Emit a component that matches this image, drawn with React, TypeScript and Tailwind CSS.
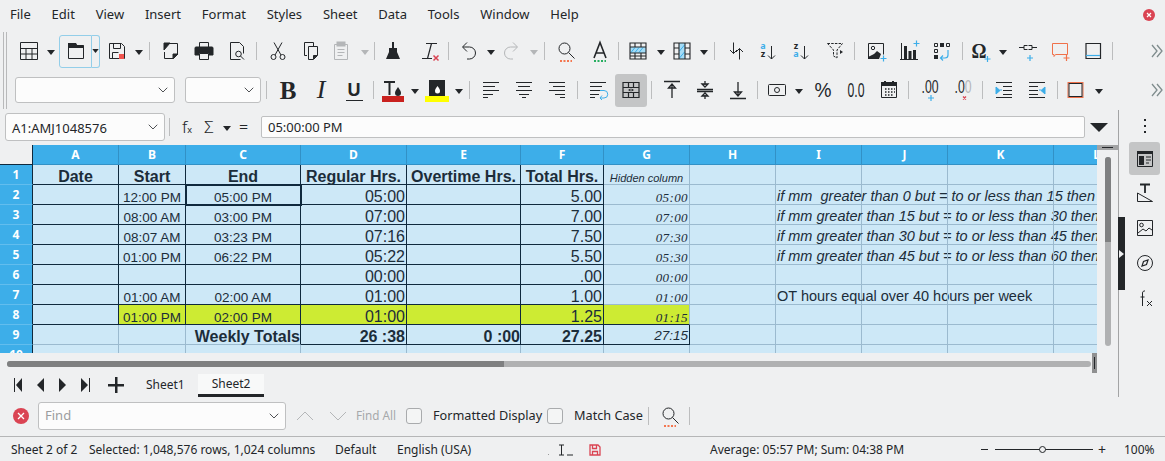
import React from "react";
import { ChevronDown } from "lucide-react";

const INK = "#232629";
const BLUE = "#3daee9";
const RED = "#da4453";
const ORANGE = "#f4764f";
const GREY = "#b4b6b8";

// --- small svg helpers ---
const Ico = ({ children, size = "w-6 h-6" }: { children: React.ReactNode; size?: string }) => (
  <svg viewBox="0 0 24 24" className={size} fill="none" stroke={INK} strokeWidth={1}>
    {children}
  </svg>
);
const Plus = ({ x = 19, y = 20, c = BLUE }: { x?: number; y?: number; c?: string }) => (
  <path d={`M${x - 3} ${y}h6M${x} ${y - 3}v6`} stroke={c} strokeWidth={1.2} />
);
const Dots = ({ c }: { c: string }) => (
  <path d="M6 22h12" stroke={c} strokeWidth={2} strokeDasharray="2 1.5" />
);
const Txt = ({ x, y, s, w = 400, f = "Noto Sans", c = INK, len, children }: {
  x: number; y: number; s: number; w?: number; f?: string; c?: string; len?: number; children: React.ReactNode;
}) => (
  <text
    x={x}
    y={y}
    fontSize={s}
    fontWeight={w}
    fontFamily={f}
    fill={c}
    stroke="none"
    textAnchor="middle"
    textLength={len}
    lengthAdjust={len ? "spacingAndGlyphs" : undefined}
  >
    {children}
  </text>
);

const Slot = ({ ml, w = "w-6", children }: { ml: string; w?: string; children: React.ReactNode }) => (
  <div className={`${ml} ${w} h-6 shrink-0 flex items-center justify-center`}>{children}</div>
);
const Arrow = ({ ml, c = INK }: { ml: string; c?: string }) => (
  <div className={`${ml} w-2 h-6 shrink-0 flex items-center justify-center`}>
    <svg viewBox="0 0 8 5" className="w-2 h-[5px] mt-[2px]"><path d="M0 0h8L4 5z" fill={c} /></svg>
  </div>
);
const Sep = ({ ml }: { ml: string }) => <div className={`${ml} w-px h-[18px] shrink-0 bg-[#bcbdbe]`} />;
const More = () => (
  <div className="ml-auto w-4 h-6 flex items-center justify-center">
    <svg viewBox="0 0 12 14" className="w-3 h-[14px]" fill="none" stroke="#7f8c8d" strokeWidth={1.3}>
      <path d="M1 1l5 6-5 6M6 1l5 6-5 6" />
    </svg>
  </div>
);

// --- toolbar icons ---
const TableIcon = () => (
  <Ico><path d="M3.5 3.5h17v17h-17zM3.5 9.5h17M3.5 15h17M9 9.5v11M15 9.5v11" /></Ico>
);
const OpenIcon = () => (
  <Ico><path d="M4.5 6.5h15v13h-15z" /><path d="M4 4h8l1.5 2.5H20V9H4z" fill={INK} stroke="none" /></Ico>
);
const SaveIcon = () => (
  <Ico>
    <path d="M4.5 4.5h12l3 3v12h-15zM8.5 4.5v5h7v-5M7.5 19.5v-6h6" />
    <rect x="14" y="15" width="5" height="5" fill="#f0544f" stroke="none" />
  </Ico>
);
const PdfIcon = () => (
  <Ico>
    <path d="M5.5 8V4.5h13v11l-4 4h-9V13" />
    <path d="M5 4h6L5 11zM14 19.5v-4.5h5z" fill={INK} />
  </Ico>
);
const PrintIcon = () => (
  <Ico>
    <path d="M7.5 8V3.5h9V8M7.5 14.5h9v6h-9z" />
    <path d="M4 8h16a1 1 0 0 1 1 1v7h-4v-2.5H7V16H3V9a1 1 0 0 1 1-1z" fill={INK} />
  </Ico>
);
const PreviewIcon = () => (
  <Ico>
    <path d="M15.5 20.5h-10v-17h9l4 4v7" />
    <circle cx="13.5" cy="15" r="2.8" />
    <path d="M15.5 17l3.5 3.5" />
  </Ico>
);
const CutIcon = () => (
  <Ico>
    <circle cx="7.5" cy="18" r="2.5" /><circle cx="16.5" cy="18" r="2.5" />
    <path d="M9 16L16 3.5M15 16L8 3.5" />
  </Ico>
);
const CopyIcon = () => (
  <Ico>
    <path d="M8 16.5H5.5v-13h9V7" />
    <path d="M9.5 7.5h9v9l-4 4h-5z" />
    <path d="M14.5 20v-3.5H18z" fill={INK} />
  </Ico>
);
const PasteIcon = () => (
  <svg viewBox="0 0 24 24" className="w-6 h-6" fill="none" stroke={GREY}>
    <path d="M5.5 5.5h13v15h-13zM8.5 10.5h7M8.5 13.5h7M8.5 16.5h5" />
    <rect x="8" y="3" width="8" height="4" fill={GREY} />
  </svg>
);
const BrushIcon = () => (
  <Ico>
    <path d="M11 3h2v6h-2z" fill={INK} stroke="none" />
    <path d="M8 9h8v4l3 7H5l3-7z" fill={INK} stroke="none" />
  </Ico>
);
const ClearIcon = () => (
  <Ico>
    <path d="M8 4.5h11M13.5 4.5L9.5 19.5M4 19.5h10" strokeWidth={1.2} />
    <path d="M15.5 16.5l5 5M20.5 16.5l-5 5" stroke={RED} strokeWidth={1.5} />
  </Ico>
);
const UndoIcon = ({ c = INK, flip = false }: { c?: string; flip?: boolean }) => (
  <svg viewBox="0 0 24 24" className={`w-6 h-6 ${flip ? "-scale-x-100" : ""}`} fill="none" stroke={c}>
    <path d="M11 3.5L6.5 8l4.5 4.5M7 8h6.5a6 6 0 0 1 0 12H11" />
  </svg>
);
const FindIcon = () => (
  <Ico>
    <circle cx="10.5" cy="9.5" r="5.5" /><path d="M14.5 13.5L20.5 19.5" />
    <Dots c={ORANGE} />
  </Ico>
);
const SpellIcon = () => (
  <Ico>
    <path d="M6 19L12 3.5L18 19M8 14h8" strokeWidth={1.6} />
    <Dots c="#27ae60" />
  </Ico>
);
const RowIcon = () => (
  <Ico>
    <rect x="4" y="8" width="16" height="6" fill="#a5dcf6" stroke="none" />
    <path d="M5 13.5l4-5M9 13.5l4-5M13 13.5l4-5" stroke={BLUE} />
    <path d="M4 4h16v16H4zM4 8h16M4 14h16M4 17h16M9 4v4M15 4v4M9 14v6M15 14v6" strokeWidth={1.1} />
  </Ico>
);
const ColIcon = () => (
  <Ico>
    <rect x="9" y="4" width="6" height="16" fill="#a5dcf6" stroke="none" />
    <path d="M9.5 12l5-6M9.5 19l5-6" stroke={BLUE} />
    <path d="M4 4h16v16H4zM9 4v16M15 4v16M4 9h5M4 15h5M15 9h5M15 15h5" strokeWidth={1.1} />
  </Ico>
);
const SortIcon = () => (
  <Ico>
    <path d="M9.5 3.5v11M6 11l3.5 3.5L13 11M15.5 9.5v11M12 13l3.5-3.5L19 13" />
  </Ico>
);
const AzIcon = ({ flip = false }: { flip?: boolean }) => (
  <Ico>
    <text fontSize={9} fontWeight={700} fontFamily="Noto Sans" stroke="none" textAnchor="middle">
      <tspan x={7} y={10} fill={flip ? INK : BLUE}>{flip ? "z" : "a"}</tspan>
      <tspan x={7} y={18} fill={flip ? BLUE : INK}>{flip ? "a" : "z"}</tspan>
    </text>
    <path d="M15.5 7v13M12 16.5l3.5 3.5 3.5-3.5" />
  </Ico>
);
const FilterIcon = () => (
  <Ico>
    <path d="M4.5 4.5h15L14 11v8l-3.5-2v-6z" strokeDasharray="2.5 1.2" />
    <path d="M17 11l3 2-3 2z" fill={INK} stroke="none" />
  </Ico>
);
const ImageIcon = () => (
  <Ico>
    <path d="M4.5 4.5h15v11M14 19.5H4.5v-15" />
    <circle cx="9" cy="9" r="1.7" />
    <path d="M4 20v-2l6-3 3-3 4 3-2 5z" fill={INK} stroke="none" />
    <Plus x={19.5} y={19.5} />
  </Ico>
);
const ChartIcon = () => (
  <Ico>
    <path d="M3 20.5h18M4.5 4v16" />
    <path d="M7 7h3v13H7zM11.5 12h3v8h-3zM16 11h3v9h-3z" fill={INK} stroke="none" />
    <Plus x={19.5} y={4.5} />
  </Ico>
);
const PivotIcon = () => (
  <Ico>
    <path d="M4.5 4.5h3v3h-3zM16.5 4.5h3v3h-3zM4.5 10.5h3v3h-3z" />
    <path d="M10 4h4v4h-4zM4 16h4v4H4z" fill={INK} stroke="none" />
    <path d="M18 11v5a3 3 0 0 1-3 3h-4M13 16.5L10.5 19l2.5 2.5" stroke={BLUE} strokeWidth={1.2} />
  </Ico>
);
const OmegaIcon = () => (
  <Ico>
    <Txt x={11} y={19} s={22} w={700} f="Liberation Serif" len={15}>Ω</Txt>
    <Plus x={19.5} y={20} />
  </Ico>
);
const LinkIcon = () => (
  <Ico>
    <path d="M3 8.5h5M16 8.5h5M11.5 6.5H8v4h3.5M12.5 6.5H16v4h-3.5" />
    <Plus x={14} y={19} />
  </Ico>
);
const CommentIcon = () => (
  <Ico>
    <path d="M4.5 4.5h15v11h-12l-1.5 2v-2H4.5z" stroke="#f0714a" />
    <Plus x={18.5} y={19} c="#f0714a" />
  </Ico>
);
const HeaderIcon = () => (
  <Ico>
    <path d="M5 4.5h14.5v15H5z" strokeWidth={1.2} />
    <path d="M5 16.5h14" stroke={BLUE} strokeWidth={1.2} />
  </Ico>
);
const FontColor = () => (
  <svg viewBox="0 0 24 24" className="w-6 h-6">
    <path d="M3 3h11v2H9.5v12h-2V5H3z" fill={INK} />
    <path d="M17 9c2 3 3 4 3 6a3 3 0 0 1-6 0c0-2 1-3 3-6z" fill={INK} />
    <rect x="1" y="18" width="22" height="6" fill="#c9211e" />
  </svg>
);
const BgColor = () => (
  <svg viewBox="0 0 24 24" className="w-6 h-6">
    <rect x="4" y="2" width="16" height="16" fill={INK} />
    <path d="M12.5 8c2 2.5 2.5 3.5 2.5 5a2.5 2.5 0 0 1-5 0c0-1.5.5-2.5 2.500-5z" fill="#fff" />
    <rect x="0" y="18" width="24" height="6" fill="#ffff00" />
  </svg>
);
const Lines = ({ d, extra }: { d: string; extra?: React.ReactNode }) => (
  <Ico><path d={d} />{extra}</Ico>
);
// merge & center: three-row grid with the middle row open and two small arrows
const MergeIcon = () => (
  <Ico>
    <path d="M4 4.5h16v15H4zM4 9.500h16M4 14.500h16M9.500 4.500v5M14.500 4.500v5M9.500 14.500v5M14.500 14.500v5" strokeWidth={1.2} />
    <path d="M11.500 10.500l-2.500 1.500 2.500 1.500zM12.500 10.500l2.500 1.500-2.500 1.500z" fill={INK} stroke="none" />
  </Ico>
);
const VAlign = ({ d }: { d: string }) => <Ico><path d={d} strokeWidth={1.3} /></Ico>;
const CashIcon = () => (
  <Ico><rect x="3.5" y="6.5" width="17" height="11" rx="1" /><circle cx="12" cy="12" r="2.5" /></Ico>
);
const CalIcon = () => (
  <Ico>
    <path d="M4.5 4.5h15v15h-15z" />
    <path d="M4 4h3V3h2v1h6V3h2v1h3v4H4z" fill={INK} stroke="none" />
    <path d="M8 11h1.5M11 11h1.5M14 11h1.5M17 11h1M8 14h1.5M11 14h1.5M14 14h1.5M17 14h1M8 17h1.5M11 17h1.5M14 17h1.5" strokeWidth={1.5} />
  </Ico>
);
const BorderIcon = () => (
  <Ico>
    <rect x="4" y="4.5" width="15" height="15" stroke="#f0714a" />
    <rect x="5" y="5.5" width="13" height="13" />
  </Ico>
);

const Combo = ({ w, children, h = "h-[26px]" }: { w: string; h?: string; children?: React.ReactNode }) => (
  <div className={`${w} ${h} shrink-0 bg-[#fcfcfc] border border-[#bfc0c1] rounded-[3px] flex items-center justify-between pl-[6px] pr-[3px]`}>
    <span>{children}</span>
    <ChevronDown size={16} strokeWidth={1.2} color={INK} />
  </div>
);

// --- sheet data ---
const HEADS = ["A", "B", "C", "D", "E", "F", "G", "H", "I", "J", "K", "L"];
const RULES = [
  "if mm  greater than 0 but = to or less than 15 then",
  "if mm greater than 15 but = to or less than 30 then",
  "if mm greater than 30 but = to or less than 45 then",
  "if mm greater than 45 but = to or less than 60 then",
];
const ROWS: string[][] = [
  ["Date", "Start", "End", "Regular Hrs.", "Overtime Hrs.", "Total Hrs.", "Hidden column", "", "", "", "", ""],
  ["", "12:00 PM", "05:00 PM", "05:00", "", "5.00", "05:00", "", RULES[0], "", "", ""],
  ["", "08:00 AM", "03:00 PM", "07:00", "", "7.00", "07:00", "", RULES[1], "", "", ""],
  ["", "08:07 AM", "03:23 PM", "07:16", "", "7.50", "07:30", "", RULES[2], "", "", ""],
  ["", "01:00 PM", "06:22 PM", "05:22", "", "5.50", "05:30", "", RULES[3], "", "", ""],
  ["", "", "", "00:00", "", ".00", "00:00", "", "", "", "", ""],
  ["", "01:00 AM", "02:00 AM", "01:00", "", "1.00", "01:00", "", "OT hours equal over 40 hours per week", "", "", ""],
  ["", "01:00 PM", "02:00 PM", "01:00", "", "1.25", "01:15", "", "", "", "", ""],
  ["", "", "Weekly Totals", "26 :38", "0 :00", "27.25", "27:15", "", "", "", "", ""],
  ["", "", "", "", "", "", "", "", "", "", "", ""],
];

const textClass = (r: number, c: number) => {
  if (r === 0) {
    if (c === 6) return "justify-center items-end text-[11px] italic leading-[11px]";
    return "justify-center items-center text-[16px] font-bold pt-[4px]";
  }
  if (r === 8) {
    if (c === 6) return "justify-end items-center text-[13.5px] italic pt-[4px] pr-[1px]";
    if (c === 4 || c === 2) return "justify-end items-center text-[16px] font-bold pt-[4px]";
    return "justify-end items-center text-[16px] font-bold pt-[4px] pr-[1px]";
  }
  if (c === 1 || c === 2) return "justify-center items-end text-[13.5px] leading-[13px]";
  if (c === 3 || c === 5) return "justify-end items-center text-[16px] pr-[1px] pt-[4px]";
  if (c === 6) return "justify-end items-end text-[13px] italic font-['Liberation_Serif'] tracking-[0.4px] leading-[13px] pr-[1px]";
  if (c === 8) return `justify-start items-center text-[14.5px] whitespace-pre pl-[1px] pt-[5px] ${r === 6 ? "" : "italic"}`;
  return "";
};

const cellBorder = (r: number, c: number) => {
  const right = (r <= 7 && c <= 5) || (r === 8 && c >= 2 && c <= 6);
  const bottom = (r <= 7 && c <= 5) || (r === 7 && c === 6) || (r === 8 && c >= 3 && c <= 6);
  return `${right ? "border-r-[#10293d]" : "border-r-[#9bbacf]"} ${bottom ? "border-b-[#10293d]" : "border-b-[#9bbacf]"}`;
};

const Sheet = () => (
  <div className="w-[1097px] h-[208px] overflow-hidden bg-[#cde8f7] shrink-0 font-['Liberation_Sans'] text-[#1c2d3a]">
    <div className="grid grid-cols-[33px_86px_67px_115px_106px_114px_83px_86px_86px_86px_86px_106px_86px] auto-rows-[20px] w-[1140px]">
      <div className="bg-[#eff0f1] border-r border-b border-[#10293d]" />
      {HEADS.map((h) => (
        <div key={h} className="bg-[#3daee9] border-r border-b border-[#3291c6] flex items-center justify-center text-white text-[12px] font-bold font-['Noto_Sans']">
          {h}
        </div>
      ))}
      {ROWS.map((row, r) => (
        <React.Fragment key={r}>
          <div className="bg-[#3daee9] border-r border-b border-r-[#10293d] border-b-[#62bdee] flex items-center justify-center text-white text-[12px] font-bold font-['Noto_Sans']">
            {r + 1}
          </div>
          {row.map((t, c) => (
            <div
              key={c}
              className={`flex min-w-0 border-r border-b ${cellBorder(r, c)} ${textClass(r, c)} ${r === 7 && c >= 1 && c <= 6 ? "bg-[#cdeb33]" : ""} ${r === 1 && c === 2 ? "outline-2 -outline-offset-1 outline-[#10293d]" : ""}`}
            >
              <span className="whitespace-pre">{t}</span>
            </div>
          ))}
        </React.Fragment>
      ))}
    </div>
  </div>
);

const Check = () => <div className="w-4 h-4 rounded-[3px] border border-[#a9abad] bg-[#f4f5f5] shrink-0" />;
const Dot = ({ w }: { w: string }) => (
  <span className={`${w} flex shrink-0`}><span className="w-px h-px mt-[9px] bg-[#9a9b9c]" /></span>
);

export default function App() {
  return (
    <div className="w-[1165px] h-[461px] overflow-hidden bg-[#eff0f1] text-[#232629] font-['Noto_Sans'] flex flex-col">
      {/* menu bar */}
      <div className="h-[30px] flex items-center pl-[10px] gap-[20.8px] text-[13px] shrink-0">
        {["File", "Edit", "View", "Insert", "Format", "Styles", "Sheet", "Data", "Tools", "Window", "Help"].map((m) => (
          <span key={m}>{m}</span>
        ))}
        <div className="ml-auto mr-[10px] w-3 h-3 rounded-full bg-[#da4453] flex items-center justify-center">
          <svg viewBox="0 0 12 12" className="w-3 h-3" stroke="#fff" strokeWidth={1.2}><path d="M4 4l4 4M8 4l-4 4" /></svg>
        </div>
      </div>

      {/* toolbars */}
      <div className="flex shrink-0 h-[80px]">
        <div className="ml-[3px] w-1 mt-[2px] mb-px border-x border-[#b8b9ba] shrink-0" />
        <div className="flex-1 flex flex-col min-w-0">
          <div className="h-10 flex items-center pt-[2px]">
            <Slot ml="ml-[10px]"><TableIcon /></Slot>
            <Arrow ml="ml-[6px]" />
            <div className="ml-1 flex h-[33px] w-[41px] shrink-0">
              <div className="w-[33px] border border-[#93cee9] rounded-l-[3px] flex items-center justify-center"><OpenIcon /></div>
              <div className="w-2 border border-l-0 border-[#93cee9] rounded-r-[3px] flex items-center justify-center">
                <svg viewBox="0 0 8 5" className="w-[7px] h-1"><path d="M0 0h8L4 5z" fill={INK} /></svg>
              </div>
            </div>
            <Slot ml="ml-[5px]"><SaveIcon /></Slot>
            <Arrow ml="ml-[6px]" />
            <Sep ml="ml-[6px]" />
            <Slot ml="ml-[9px]"><PdfIcon /></Slot>
            <Slot ml="ml-[9px]"><PrintIcon /></Slot>
            <Slot ml="ml-[9px]"><PreviewIcon /></Slot>
            <Sep ml="ml-[7px]" />
            <Slot ml="ml-[9px]"><CutIcon /></Slot>
            <Slot ml="ml-[9px]"><CopyIcon /></Slot>
            <Slot ml="ml-[6px]"><PasteIcon /></Slot>
            <Arrow ml="ml-[8px]" c={GREY} />
            <Sep ml="ml-[5px]" />
            <Slot ml="ml-[6px]"><BrushIcon /></Slot>
            <Slot ml="ml-[13px]"><ClearIcon /></Slot>
            <Sep ml="ml-[6px]" />
            <Slot ml="ml-[7px]"><UndoIcon /></Slot>
            <Arrow ml="ml-[7px]" />
            <Slot ml="ml-[5px]"><UndoIcon c={GREY} flip /></Slot>
            <Arrow ml="ml-[6px]" c={GREY} />
            <Sep ml="ml-[6px]" />
            <Slot ml="ml-[9px]"><FindIcon /></Slot>
            <Slot ml="ml-[10px]"><SpellIcon /></Slot>
            <Sep ml="ml-[6px]" />
            <Slot ml="ml-[7px]"><RowIcon /></Slot>
            <Arrow ml="ml-[7px]" />
            <Slot ml="ml-[5px]"><ColIcon /></Slot>
            <Arrow ml="ml-[6px]" />
            <Sep ml="ml-[6px]" />
            <Slot ml="ml-[9px]"><SortIcon /></Slot>
            <Slot ml="ml-[8px]"><AzIcon /></Slot>
            <Slot ml="ml-[9px]"><AzIcon flip /></Slot>
            <Slot ml="ml-[10px]"><FilterIcon /></Slot>
            <Sep ml="ml-[7px]" />
            <Slot ml="ml-[9px]"><ImageIcon /></Slot>
            <Slot ml="ml-[9px]"><ChartIcon /></Slot>
            <Slot ml="ml-[9px]"><PivotIcon /></Slot>
            <Sep ml="ml-[8px]" />
            <Slot ml="ml-[5px]"><OmegaIcon /></Slot>
            <Arrow ml="ml-[7px]" />
            <Slot ml="ml-[9px]"><LinkIcon /></Slot>
            <Slot ml="ml-[8px]"><CommentIcon /></Slot>
            <Slot ml="ml-[9px]"><HeaderIcon /></Slot>
            <Sep ml="ml-[7px]" />
            <More />
          </div>
          <div className="h-10 flex items-center">
            <div className="ml-2"><Combo w="w-[160px]" /></div>
            <div className="ml-[10px]"><Combo w="w-[76px]" /></div>
            <Sep ml="ml-[5px]" />
            <Slot ml="ml-[9px]"><span className="font-['Liberation_Serif'] font-bold text-[25px] leading-none">B</span></Slot>
            <Slot ml="ml-[9px]"><span className="font-['Liberation_Serif'] italic text-[26px] leading-none">I</span></Slot>
            <Slot ml="ml-[9px]"><span className="font-['Liberation_Sans'] font-bold text-[18px] leading-[20px] border-b border-[#232629] px-[2px]">U</span></Slot>
            <Sep ml="ml-[7px]" />
            <Slot ml="ml-[7px]"><FontColor /></Slot>
            <Arrow ml="ml-[6px]" />
            <Slot ml="ml-[6px]"><BgColor /></Slot>
            <Arrow ml="ml-[6px]" />
            <Sep ml="ml-[6px]" />
            <Slot ml="ml-[9px]"><Lines d="M4 4.5h16M4 8.5h12M4 12.5h16M4 16.5h10M4 19.5h5" /></Slot>
            <Slot ml="ml-[9px]"><Lines d="M4 4.5h16M6 8.5h12M4 12.5h16M7 16.5h10M10 19.5h4" /></Slot>
            <Slot ml="ml-[9px]"><Lines d="M4 4.5h16M8 8.5h12M4 12.5h16M10 16.5h10M15 19.5h5" /></Slot>
            <Sep ml="ml-[8px]" />
            <Slot ml="ml-[8px]">
              <Lines
                d="M4 4.5h16M4 8.5h12M4 12.5h11M4 16.5h9M4 19.5h5"
                extra={<path d="M14 12.5h4a2.5 2.5 0 0 1 0 7.5h-4M16 17.500L14 20l2 2" stroke={BLUE} />}
              />
            </Slot>
            <div className="ml-[5px] w-8 h-[33px] shrink-0 rounded-[3px] bg-[#c4c5c6] flex items-center justify-center"><MergeIcon /></div>
            <Sep ml="ml-1" />
            <Slot ml="ml-2"><VAlign d="M4 3.5h16M12 20V7M8.5 10L12 6l3.5 4z" /></Slot>
            <Slot ml="ml-[9px]"><VAlign d="M4 11.5h16M4 13.5h16M12 3v4M12 21v-4M9 6l3 3 3-3zM9 18l3-3 3 3z" /></Slot>
            <Slot ml="ml-[9px]"><VAlign d="M4 20.5h16M12 4v13M8.5 14L12 18l3.5-4z" /></Slot>
            <Sep ml="ml-[7px]" />
            <Slot ml="ml-[7px]"><CashIcon /></Slot>
            <Arrow ml="ml-[6px]" />
            <Slot ml="ml-2"><Ico><Txt x={12} y={19} s={21} f="Liberation Sans" len={17}>%</Txt></Ico></Slot>
            <Slot ml="ml-[9px]"><Ico><Txt x={12} y={19} s={21} f="Liberation Sans" len={17}>0.0</Txt></Ico></Slot>
            <Slot ml="ml-[9px]"><CalIcon /></Slot>
            <Sep ml="ml-[7px]" />
            <Slot ml="ml-[9px]">
              <Ico>
                <Txt x={12} y={15} s={18} f="Liberation Sans" len={17}>.00</Txt>
                <Plus x={13} y={20} />
              </Ico>
            </Slot>
            <Slot ml="ml-[9px]">
              <Ico>
                <text x={12} y={15} fontSize={18} fontFamily="Liberation Sans" fill={INK} stroke="none" textAnchor="middle" textLength={17} lengthAdjust="spacingAndGlyphs">
                  .0<tspan fill={GREY}>0</tspan>
                </text>
                <path d="M12 18.5l3 3M15 18.5l-3 3" stroke={RED} strokeWidth={1.3} />
              </Ico>
            </Slot>
            <Sep ml="ml-[7px]" />
            <Slot ml="ml-[9px]">
              <Lines
                d="M4 4.5h16M11 8.5h9M11 12.5h9M11 16.5h9M4 19.5h16"
                extra={<path d="M4 9l4 3.5L4 16zM8 12h2" fill={BLUE} stroke={BLUE} />}
              />
            </Slot>
            <Slot ml="ml-[9px]">
              <Lines
                d="M4 4.5h16M4 8.5h9M4 12.5h9M4 16.5h9M4 19.5h16"
                extra={<path d="M20 9l-4 3.5 4 3.5zM16 12h-2" fill={BLUE} stroke={BLUE} />}
              />
            </Slot>
            <Sep ml="ml-2" />
            <Slot ml="ml-[6px]"><BorderIcon /></Slot>
            <Arrow ml="ml-[7px]" />
            <More />
          </div>
        </div>
      </div>

      {/* main area */}
      <div className="flex h-[287px] shrink-0">
        <div className="w-[1118px] flex flex-col shrink-0">
          <div className="h-[35px] flex items-start pt-[3px] shrink-0">
            <div className="ml-[5px]">
              <Combo w="w-[160px]" h="h-[28px]"><span className="text-[13px]">A1:AMJ1048576</span></Combo>
            </div>
            <div className="ml-[4px] mt-[5px] w-px h-[18px] bg-[#bcbdbe]" />
            <span className="ml-[12px] mt-[2px] w-[14px] text-[17px] leading-[24px] font-light">f<span className="text-[9px] font-normal">x</span></span>
            <span className="ml-[3px] mt-[2px] w-5 text-[17px] leading-[24px] text-center font-light">Σ</span>
            <svg viewBox="0 0 8 5" className="ml-[4px] mt-[13px] w-2 h-[5px]"><path d="M0 0h8L4 5z" fill={INK} /></svg>
            <span className="ml-[8px] mt-[2px] text-[16px] leading-[24px] w-[13px] font-light">=</span>
            <div className="ml-[9px] mt-[3px] w-[824px] h-[22px] bg-[#fcfcfc] border border-[#bfc0c1] rounded-[2px] pl-[6px] text-[13px] leading-[21px]">
              05:00:00 PM
            </div>
            <svg viewBox="0 0 18 9" className="ml-[5px] mt-[10px] w-[18px] h-[9px]"><path d="M0 0h18L9 9z" fill={INK} /></svg>
          </div>

          <div className="flex h-[208px] shrink-0">
            <Sheet />
            <div className="w-[21px] flex flex-col items-center">
              <div className="h-[5px] w-full bg-[#a2a3a4] flex items-center justify-center">
                <div className="w-[11px] h-px bg-[#232629]" />
              </div>
              <div className="mt-[7px] w-[6px] h-[189px] rounded-full bg-[#b0b1b2] overflow-hidden">
                <div className="w-[6px] h-[85px] bg-[#7f8081]" />
              </div>
            </div>
          </div>

          <div className="h-[19px] flex shrink-0 w-[1097px] pl-[7px]">
            <div className="w-[1084px] h-[6px] mt-[8px] rounded-full bg-[#b0b1b2] overflow-hidden shrink-0">
              <div className="w-[497px] h-[6px] bg-[#7f8081]" />
            </div>
            <div className="ml-[1px] w-[5px] h-[20px] bg-[#8f9091] flex justify-center items-center shrink-0">
              <div className="w-px h-[12px] bg-[#232629]" />
            </div>
          </div>

          <div className="h-[25px] flex items-center shrink-0">
            <svg viewBox="0 0 100 14" className="ml-[13px] w-[100px] h-[14px] shrink-0" fill={INK}>
              <path d="M1 0h1v14H1zM9 0v14L3 7z" />
              <path d="M31 0v14L24 7z" />
              <path d="M46 0v14l7-7z" />
              <path d="M68 0v14l7-7zM76 0h1v14h-1z" />
            </svg>
            <svg viewBox="0 0 16 16" className="-ml-[5px] w-4 h-4 shrink-0" fill={INK}><path d="M7 0h2.5v7H16v2.5H9.5V16H7V9.5H0V7h7z" /></svg>
            <span className="ml-[22px] w-[52px] text-[12px] shrink-0">Sheet1</span>
            <div className="w-[66px] h-[23px] mt-[2px] bg-[#f8f9f9] border-b-[3px] border-[#232629] text-[12px] flex items-center justify-center shrink-0">Sheet2</div>
          </div>
        </div>

        <div className="relative w-[47px] border-l border-[#a3a4a5] flex flex-col shrink-0">
          <div className="absolute -left-px top-[107px] w-[7px] h-[73px] bg-[#232629] flex items-center justify-center">
            <svg viewBox="0 0 5 8" className="w-[5px] h-2"><path d="M0 0l5 4-5 4z" fill="#eff0f1" /></svg>
          </div>
          <div className="ml-[10px] w-[31px] h-[32px] flex items-center justify-center">
            <svg viewBox="0 0 4 14" className="w-1 h-[14px]" fill={INK}><path d="M1 0h2v2H1zM1 6h2v2H1zM1 12h2v2H1z" /></svg>
          </div>
          <div className="ml-[10px] w-[31px] h-[33px] rounded-[3px] bg-[#c4c5c6] flex items-center justify-center">
            <Ico>
              <path d="M4.5 4.5h15v15h-15z" />
              <rect x="4" y="4" width="16" height="3" fill={INK} stroke="none" />
              <rect x="6" y="9" width="5" height="9" fill={INK} stroke="none" />
              <path d="M13 10h5M13 13h5M13 16h3" />
            </Ico>
          </div>
          <div className="ml-[10px] w-[31px] h-[35px] flex items-center justify-center">
            <Ico>
              <path d="M7 3.5h10M12 3.5V12" strokeWidth={1.8} />
              <path d="M4.5 20.5V12l15 8.5z" />
            </Ico>
          </div>
          <div className="ml-[10px] w-[31px] h-[35px] flex items-center justify-center">
            <Ico>
              <path d="M4.5 4.5h15v15h-15z" />
              <circle cx="8.5" cy="9" r="1.8" />
              <path d="M5 17l5-4 3 2 3-3 3 2" />
            </Ico>
          </div>
          <div className="ml-[10px] w-[31px] h-[35px] flex items-center justify-center">
            <Ico>
              <circle cx="12" cy="12" r="7.5" />
              <path d="M15 9l-1.5 4.5L9 15l1.5-4.5z" fill="none" strokeWidth={1.2} />
            </Ico>
          </div>
          <div className="ml-[10px] w-[31px] h-[35px] flex items-center justify-center">
            <Ico>
              <path d="M12 5a2 2 0 0 0-2.5 2v13M7.5 11h4M14 15l5 5M19 15l-5 5" />
            </Ico>
          </div>
        </div>
      </div>

      {/* find bar */}
      <div className="h-[39px] flex items-center shrink-0 pb-px text-[12.7px]">
        <div className="ml-[13px] w-4 h-4 rounded-full bg-[#da4453] flex items-center justify-center shrink-0">
          <svg viewBox="0 0 16 16" className="w-4 h-4" stroke="#fff" strokeWidth={1.3}><path d="M5 5l6 6M11 5l-6 6" /></svg>
        </div>
        <div className="ml-[9px] text-[#9b9c9e]">
          <Combo w="w-[248px]" h="h-[28px]"><span className="text-[13px]">Find</span></Combo>
        </div>
        <svg viewBox="0 0 18 10" className="ml-[10px] w-[18px] h-[10px] shrink-0" fill="none" stroke={GREY}><path d="M1 9l8-8 8 8" /></svg>
        <svg viewBox="0 0 18 10" className="ml-[15px] w-[18px] h-[10px] shrink-0" fill="none" stroke={GREY}><path d="M1 1l8 8 8-8" /></svg>
        <span className="ml-[9px] w-[50px] text-[11.7px] text-[#a6a8aa] shrink-0">Find All</span>
        <Check />
        <span className="ml-[11px] w-[114px] shrink-0">Formatted Display</span>
        <Check />
        <span className="ml-[11px] w-[74px] shrink-0">Match Case</span>
        <div className="w-px h-[18px] bg-[#bcbdbe] shrink-0" />
        <Slot ml="ml-[9px]">
          <Ico>
            <circle cx="10.5" cy="9.5" r="5.5" /><path d="M14.5 13.5L20.5 19.5" />
            <Dots c={ORANGE} />
          </Ico>
        </Slot>
        <div className="ml-[7px] w-px h-[18px] bg-[#bcbdbe] shrink-0" />
      </div>

      {/* status bar */}
      <div className="h-[25px] border-t border-[#b5b6b7] flex items-center text-[12px] shrink-0 pl-[11px] pt-px">
        <span className="w-[78px] shrink-0">Sheet 2 of 2</span>
        <span className="w-[246px] shrink-0">Selected: 1,048,576 rows, 1,024 columns</span>
        <span className="w-[62px] shrink-0">Default</span>
        <span className="w-[151px] shrink-0">English (USA)</span>
        <Dot w="w-[10px]" />
        <svg viewBox="0 0 15 12" className="w-[15px] h-3 shrink-0" fill="none" stroke={INK}>
          <path d="M1 1h5M3.5 1v10M1 11h5M9 11h6" />
        </svg>
        <svg viewBox="0 0 12 12" className="ml-[16px] w-3 h-3 shrink-0" fill="none" stroke={RED} strokeWidth={1.3}>
          <path d="M1 1h8l2 2v8H1zM3.5 1v3.5h4V1M3.5 11V7.5h5V11" />
        </svg>
        <span className="ml-[109px] w-[271px] shrink-0">Average: 05:57 PM; Sum: 04:38 PM</span>
        <span className="w-[7px] h-px bg-[#232629] shrink-0" />
        <div className="ml-[7px] w-[98px] h-px bg-[#232629] flex items-center shrink-0">
          <div className="ml-[44px] w-[7px] h-[7px] rounded-full border border-[#232629] bg-[#eff0f1]" />
        </div>
        <span className="ml-[5px] w-[10px] shrink-0 text-[14px] leading-none">+</span>
        <span className="ml-[16px] shrink-0">100%</span>
      </div>
    </div>
  );
}
